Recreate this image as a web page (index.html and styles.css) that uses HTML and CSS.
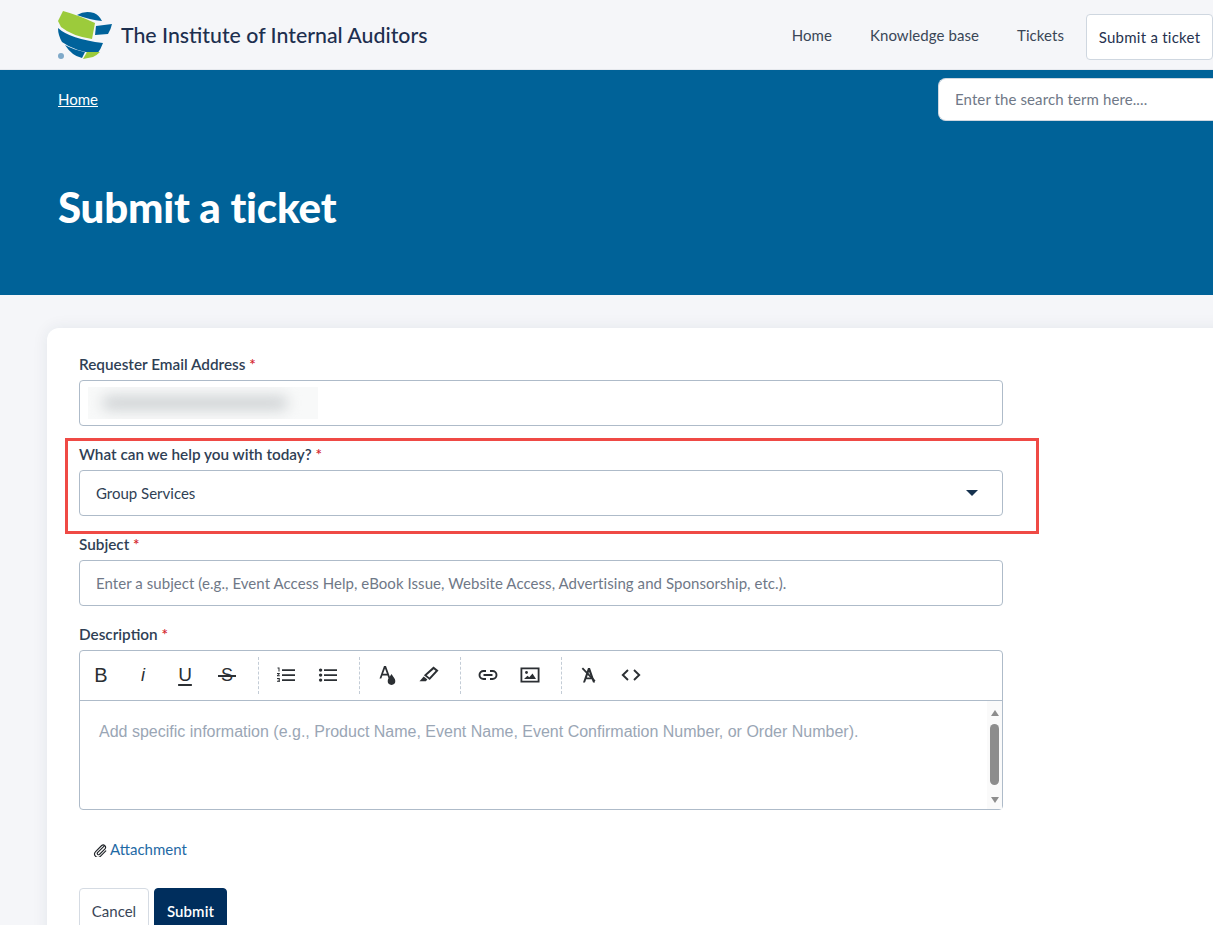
FILE: index.html
```html
<!DOCTYPE html>
<html lang="en">
<head>
<meta charset="utf-8">
<title>Submit a ticket</title>
<link rel="stylesheet" href="styles.css">
</head>
<body>
<header class="topbar">
  <a class="brand" href="#">
    <svg class="brand-logo" viewBox="57 11 56 50" width="56" height="50" aria-hidden="true">
      <path fill="#9ccb3b" d="M58 21 L63 11 Q78 15 95 23 L92 39 Q72 36 61 27 Z"/>
      <path fill="#00629b" d="M77 15 Q85 10 94 13 Q99 15 102 21 Q90 20 77 15 Z"/>
      <path fill="#00629b" d="M96 26 L112 24 Q111 29 108 34 L95 35 Z"/>
      <path fill="#00629b" d="M58 28 Q70 39 103 43 Q101 49 97 54 Q74 51 62 42 Q58 35 58 28 Z"/>
      <path fill="#00629b" d="M65 45 Q74 50 85 52 L82 58 Q72 56 65 45 Z"/>
      <path fill="#9ccb3b" d="M87 52 L100 52 Q96 56 93 57 L83 59 Z"/>
      <circle cx="61" cy="56" r="3" fill="#7fa9c9"/>
    </svg>
    <span class="brand-name">The Institute of Internal Auditors</span>
  </a>
  <nav class="nav">
    <a class="nav-link" href="#">Home</a>
    <a class="nav-link" href="#">Knowledge base</a>
    <a class="nav-link" href="#">Tickets</a>
    <a class="nav-button" href="#">Submit a ticket</a>
  </nav>
</header>

<section class="hero">
  <div class="hero-top">
    <a class="crumb" href="#">Home</a>
    <input class="search" type="text" placeholder="Enter the search term here....">
  </div>
  <h1 class="hero-title">Submit a ticket</h1>
</section>

<main class="card">
  <form class="form">
    <div class="field">
      <label class="label">Requester Email Address <span class="req">*</span></label>
      <div class="control">
        <div class="redacted"><div class="redacted-blur"></div></div>
      </div>
    </div>

    <div class="field">
      <label class="label">What can we help you with today? <span class="req">*</span></label>
      <div class="control control-select">
        <span class="value">Group Services</span>
        <span class="caret"></span>
      </div>
    </div>

    <div class="field">
      <label class="label">Subject <span class="req">*</span></label>
      <input class="control control-input" type="text" placeholder="Enter a subject (e.g., Event Access Help, eBook Issue, Website Access, Advertising and Sponsorship, etc.).">
    </div>

    <div class="field">
      <label class="label">Description <span class="req">*</span></label>
      <div class="editor">
        <div class="toolbar">
          <div class="tool-group">
            <span class="tool glyph-b">B</span>
            <span class="tool glyph-i">i</span>
            <span class="tool glyph-u">U</span>
            <span class="tool glyph-s">S</span>
          </div>
          <div class="tool-group">
            <span class="tool">
              <svg class="icon" viewBox="0 0 20 20"><path d="M6 4.200h13v1.800H6zM6 9.200h13v1.800H6zM6 14.200h13v1.800H6z"/><path d="M1.500 2.500h2v4h-1V3.500h-1zM1 8h2.800v.9L2.200 10.300h1.600v.9H1v-.9L2.600 8.900H1zM1 13h2.800v4H1v-.8h1.800v-.8H1.500v-.7h1.300v-.8H1z"/></svg>
            </span>
            <span class="tool">
              <svg class="icon" viewBox="0 0 20 20"><path d="M6 4.200h13v1.800H6zM6 9.200h13v1.800H6zM6 14.200h13v1.800H6z"/><circle cx="2.600" cy="5.100" r="1.700"/><circle cx="2.600" cy="10.100" r="1.700"/><circle cx="2.600" cy="15.100" r="1.700"/></svg>
            </span>
          </div>
          <div class="tool-group">
            <span class="tool">
              <svg class="icon" viewBox="0 0 20 20"><path d="M7 1h2l4.500 12.500h-1.900l-1.100-3H5.400l-1.100 3H2.500zM6 8.800h3.900L8 3.400z"/><path d="M14.500 9c1.700 2.800 3.800 4.600 3.800 7.100a3.800 3.800 0 0 1-7.600 0c0-2.500 2.100-4.300 3.800-7.100z"/></svg>
            </span>
            <span class="tool">
              <svg class="icon" viewBox="0 0 20 20"><path fill-rule="evenodd" d="M14.500 1.500l5 4-8.800 9.500-5.800-4.700zM14.700 4.200L7.700 10.300l2.700 2.100 6.200-6.600z"/><path d="M4.700 11.600l3.700 3-1.600 1.700H0.500z"/></svg>
            </span>
          </div>
          <div class="tool-group">
            <span class="tool">
              <svg class="icon" viewBox="0 0 20 20"><path fill="none" stroke="#2b2f33" stroke-width="1.900" d="M8 6H5.500a4 4 0 0 0 0 8H8M12 6h2.500a4 4 0 0 1 0 8H12M5.500 10h9"/></svg>
            </span>
            <span class="tool">
              <svg class="icon" viewBox="0 0 20 20"><path fill-rule="evenodd" d="M0.500 2.500h19v15h-19zM2.300 4.300v11.400h15.400V4.300z"/><circle cx="6.500" cy="7.500" r="1.400"/><path d="M4 14l3.500-3.200 1.800 1.500 3.200-3.800 3.500 5.500z"/></svg>
            </span>
          </div>
          <div class="tool-group tool-group-last">
            <span class="tool">
              <svg class="icon" viewBox="0 0 20 20"><path d="M9 3h2l5 14.500h-2l-1.200-3.300H7.200L6 17.500H4zM7.900 12.500h4.200L10 6.800z"/><path d="M4 2.500l12.500 13-1.300 1.200L2.700 3.700z"/></svg>
            </span>
            <span class="tool">
              <svg class="icon" viewBox="0 0 20 20"><path fill="none" stroke="#2b2f33" stroke-width="1.900" d="M7 5l-5.200 5L7 15M13 5l5.200 5L13 15"/></svg>
            </span>
          </div>
        </div>
        <div class="editor-body">
          <div class="editor-text">Add specific information (e.g., Product Name, Event Name, Event Confirmation Number, or Order Number).</div>
          <div class="scrollbar">
            <span class="arrow-up"></span>
            <span class="thumb"></span>
            <span class="arrow-down"></span>
          </div>
        </div>
      </div>
    </div>

    <a class="attach" href="#">
      <svg class="clip" viewBox="0 0 16 16"><path fill="none" stroke="#1f2328" stroke-width="1.300" stroke-linecap="round" d="M13 3.200L5.200 11a1.500 1.500 0 0 0 2.100 2.100l6.400-6.400a2.700 2.700 0 0 0-3.800-3.800L3 9.800a3.800 3.800 0 0 0 5.400 5.400L14.600 9"/></svg>
      <span>Attachment</span>
    </a>

    <div class="actions">
      <button class="btn btn-cancel" type="button">Cancel</button>
      <button class="btn btn-submit" type="button">Submit</button>
    </div>
  </form>
</main>

<div class="highlight"></div>
</body>
</html>
```

FILE: styles.css
```css
* { box-sizing: border-box; }
html, body { height: 925px; overflow: hidden; }
body {
  margin: 0;
  width: 1213px;
  background: #f5f6f9;
  font-family: "Lato", "Open Sans", sans-serif;
  font-size: 15px;
  color: #2f3f55;
}
a { text-decoration: none; color: inherit; }

.topbar {
  height: 70px;
  padding-left: 57px;
  display: flex;
  align-items: center;
  justify-content: space-between;
  background: #f5f6f9;
  border-bottom: 1px solid #e6e9ee;
}
.brand { display: flex; align-items: center; gap: 8px; }
.brand-logo { display: block; margin-top: 2px; }
.brand-name { font-size: 21.300px; font-weight: 500; color: #1d2f4f; }
.nav { display: flex; align-items: center; }
.nav-link { padding: 0 19px; color: #3a4657; letter-spacing: 0.07px; }
.nav-button {
  margin-left: 3px;
  margin-top: 4px;
  height: 46px;
  width: 127px;
  display: flex;
  align-items: center;
  justify-content: center;
  background: #fff;
  border: 1px solid #cfd7e0;
  border-radius: 4px;
  color: #26324f;
  letter-spacing: 0.25px;
}

.hero {
  height: 225px;
  padding: 8px 0 0 58px;
  background: #006298;
  color: #fff;
}
.hero-top { display: flex; align-items: center; justify-content: space-between; }
.crumb { color: #fff; text-decoration: underline; margin-bottom: 2px; }
.search {
  width: 275px;
  height: 43px;
  padding: 0 16px 2px;
  border: 1px solid #cfd7e0;
  border-right: 0;
  border-radius: 8px 0 0 8px;
  background: #fff;
  font: inherit;
  letter-spacing: 0.1px;
}
.search::placeholder { color: #6f7887; opacity: 1; }
.hero-title {
  margin: 62px 0 0;
  font-size: 42px;
  line-height: 48px;
  font-weight: 900;
  letter-spacing: -0.2px;
}

.card {
  margin: 33px 0 0 47px;
  width: 1300px;
  height: 700px;
  padding: 26px 0 0 32px;
  background: #fff;
  border-radius: 12px;
  box-shadow: 0 0 16px rgba(30, 50, 80, 0.08);
}
.form { width: 924px; }
.field { margin-bottom: 18px; }
.label {
  display: block;
  height: 22px;
  margin-bottom: 4px;
  line-height: 20px;
  font-size: 15.300px;
  font-weight: 600;
  color: #2f3f55;
}
.req { color: #d4232b; }
.control {
  display: flex;
  align-items: center;
  width: 100%;
  height: 46px;
  padding: 0 16px;
  background: #fff;
  border: 1px solid #aebbc9;
  border-radius: 4px;
  font: inherit;
  color: #2f3f55;
}
.control-input { letter-spacing: 0.06px; }
.control-input::placeholder { color: #6f7887; opacity: 1; }
.control-select { justify-content: space-between; }
.caret {
  margin-right: 8px;
  border-style: solid;
  border-width: 6px 6px 0;
  border-color: #16324f transparent transparent;
}
.redacted {
  margin-left: -8px;
  width: 230px;
  height: 32px;
  padding: 9px 14px;
  background: #f8f9f9;
  overflow: hidden;
}
.redacted-blur {
  width: 186px;
  height: 14px;
  background: #ced2d4;
  border-radius: 7px;
  filter: blur(7px);
}

.editor {
  height: 160px;
  margin-bottom: 0;
  background: #fff;
  border: 1px solid #aebbc9;
  border-radius: 4px;
}
.toolbar {
  height: 50px;
  padding-bottom: 1px;
  display: flex;
  align-items: center;
  gap: 6px;
  border-bottom: 1px solid #aebbc9;
}
.tool-group {
  display: flex;
  align-items: center;
  height: 37px;
  padding-right: 10px;
  border-right: 1px dashed #c3ccd6;
}
.tool-group-last { border-right: 0; }
.tool {
  position: relative;
  width: 42px;
  height: 37px;
  display: flex;
  align-items: center;
  justify-content: center;
  font-family: "Liberation Sans", sans-serif;
  font-size: 18px;
  color: #2b2f33;
}
.glyph-b { font-size: 20px; }
.glyph-i { font-style: italic; }
.glyph-u {
  font-size: 19px;
  text-decoration: underline;
  text-decoration-thickness: 2px;
  text-underline-offset: 3px;
}
.glyph-s::after {
  content: "";
  position: absolute;
  left: 12px;
  top: 18px;
  width: 18px;
  height: 2px;
  background: #2b2f33;
}
.icon { width: 20px; height: 20px; fill: #2b2f33; display: block; }

.editor-body { height: 108px; display: flex; }
.editor-text {
  flex: 1;
  padding: 20px 0 0 19px;
  font-family: "Liberation Sans", sans-serif;
  font-size: 16px;
  line-height: 22px;
  color: #9aa6b5;
}
.scrollbar {
  width: 15px;
  display: flex;
  flex-direction: column;
  align-items: center;
  padding: 9px 0 6px;
  background: #fafafa;
}
.arrow-up {
  border-style: solid;
  border-width: 0 4.500px 6px;
  border-color: transparent transparent #8d8d8d;
}
.thumb {
  width: 9px;
  height: 61px;
  margin: 8px 0 auto;
  background: #8d8d8d;
  border-radius: 5px;
}
.arrow-down {
  border-style: solid;
  border-width: 6px 4.500px 0;
  border-color: #8d8d8d transparent transparent;
}

.attach {
  display: flex;
  align-items: center;
  gap: 3px;
  height: 22px;
  margin: 28px 0 0 14px;
  color: #1f6aa5;
}
.clip { width: 14px; height: 14px; margin-top: 2px; display: block; }
.actions { display: flex; gap: 5px; margin-top: 28px; }
.btn {
  height: 46px;
  border-radius: 4px;
  font: inherit;
  padding: 0;
}
.btn-cancel {
  width: 70px;
  background: #fff;
  border: 1px solid #d5dbe3;
  color: #3a4657;
}
.btn-submit {
  width: 73px;
  background: #002e5d;
  border: 1px solid #002e5d;
  color: #fff;
  font-weight: 600;
  letter-spacing: 0.1px;
}

.highlight {
  position: absolute;
  left: 65px;
  top: 438px;
  width: 974px;
  height: 96px;
  border: 3px solid #ef4a45;
  pointer-events: none;
}
```
